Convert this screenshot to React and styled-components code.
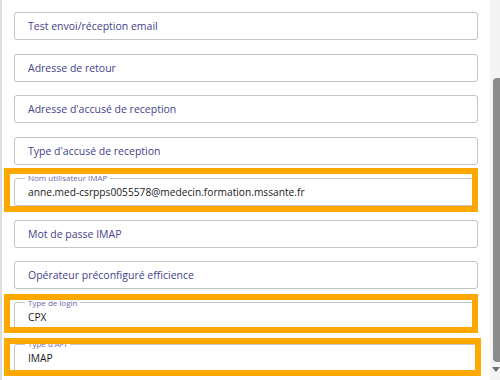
import React from 'react';
import styled, { createGlobalStyle } from 'styled-components';

const GlobalStyle = createGlobalStyle`
  html, body {
    margin: 0;
    padding: 0;
    background: #ffffff;
  }
  body {
    font-family: "Open Sans", "Liberation Sans", sans-serif;
  }
`;

const fields = [
  { placeholder: 'Test envoi/réception email' },
  { placeholder: 'Adresse de retour' },
  { placeholder: "Adresse d'accusé de reception" },
  { placeholder: "Type d'accusé de reception" },
  {
    label: 'Nom utilisateur IMAP',
    value: 'anne.med-csrpps0055578@medecin.formation.mssante.fr',
    highlight: { top: -10, left: -10, right: 0, bottom: -6 },
  },
  { placeholder: 'Mot de passe IMAP' },
  { placeholder: 'Opérateur préconfiguré efficience' },
  {
    label: 'Type de login',
    value: 'CPX',
    highlight: { top: -9, left: -10, right: 0, bottom: -2 },
  },
  {
    label: "Type d'API",
    value: 'IMAP',
    highlight: { top: -6, left: -10, right: -3, bottom: -4 },
  },
];

const App = () => {
  return (
    <>
      <GlobalStyle />
      <Page>
        <Panel>
          {fields.map((f, i) => (
            <FieldWrap key={i}>
              {f.label ? (
                <Outlined>
                  <legend>{f.label}</legend>
                  <Value>{f.value}</Value>
                </Outlined>
              ) : (
                <Field>
                  <Placeholder>{f.placeholder}</Placeholder>
                </Field>
              )}
              {f.highlight ? <Highlight {...f.highlight} /> : null}
            </FieldWrap>
          ))}
        </Panel>
        <Scrollbar>
          <Thumb />
          <ArrowDown />
        </Scrollbar>
      </Page>
    </>
  );
};

const Page = styled.div`
  width: 500px;
  height: 380px;
  overflow: hidden;
  display: flex;
  flex-direction: row;
`;

const Panel = styled.div`
  flex: 1;
  border-left: 2px solid #dedede;
  padding: 12px 12px 0 12px;
  display: flex;
  flex-direction: column;
  gap: 13.5px;
`;

const FieldWrap = styled.div`
  position: relative;
  height: 28px;
  flex-shrink: 0;
`;

const Field = styled.div`
  box-sizing: border-box;
  height: 100%;
  border: 1px solid #c4c4c4;
  border-radius: 3px;
  background: #ffffff;
  display: flex;
  align-items: center;
  padding-left: 13px;
`;

const Placeholder = styled.span`
  font-size: 10.5px;
  color: #44428a;
  white-space: nowrap;
`;

const Outlined = styled.fieldset`
  box-sizing: border-box;
  height: 33px;
  margin: -5px 0 0 0;
  padding: 0 10px;
  border: 1px solid #c4c4c4;
  border-radius: 3px;
  display: flex;
  align-items: center;

  legend {
    font-size: 8px;
    line-height: 10px;
    padding: 0 3px;
    color: #6b69a6;
    white-space: nowrap;
  }
`;

const Value = styled.span`
  font-size: 10.2px;
  color: #1a1a1a;
  white-space: nowrap;
  margin: -4px 0 0 3px;
`;

const Highlight = styled.div`
  position: absolute;
  top: ${(p) => p.top}px;
  left: ${(p) => p.left}px;
  right: ${(p) => p.right}px;
  bottom: ${(p) => p.bottom}px;
  border: 6px solid #ffa900;
  pointer-events: none;
`;

const Scrollbar = styled.div`
  width: 10px;
  background: #f4f4f4;
  display: flex;
  flex-direction: column;
  align-items: flex-end;
  padding-top: 78px;
  gap: 5px;
`;

const Thumb = styled.div`
  width: 7px;
  height: 284px;
  background: #8c8c8c;
  border-radius: 4px 0 0 4px;
`;

const ArrowDown = styled.div`
  width: 0;
  height: 0;
  border-left: 4px solid transparent;
  border-right: 4px solid transparent;
  border-top: 5px solid #6f6f6f;
`;

export default App;
